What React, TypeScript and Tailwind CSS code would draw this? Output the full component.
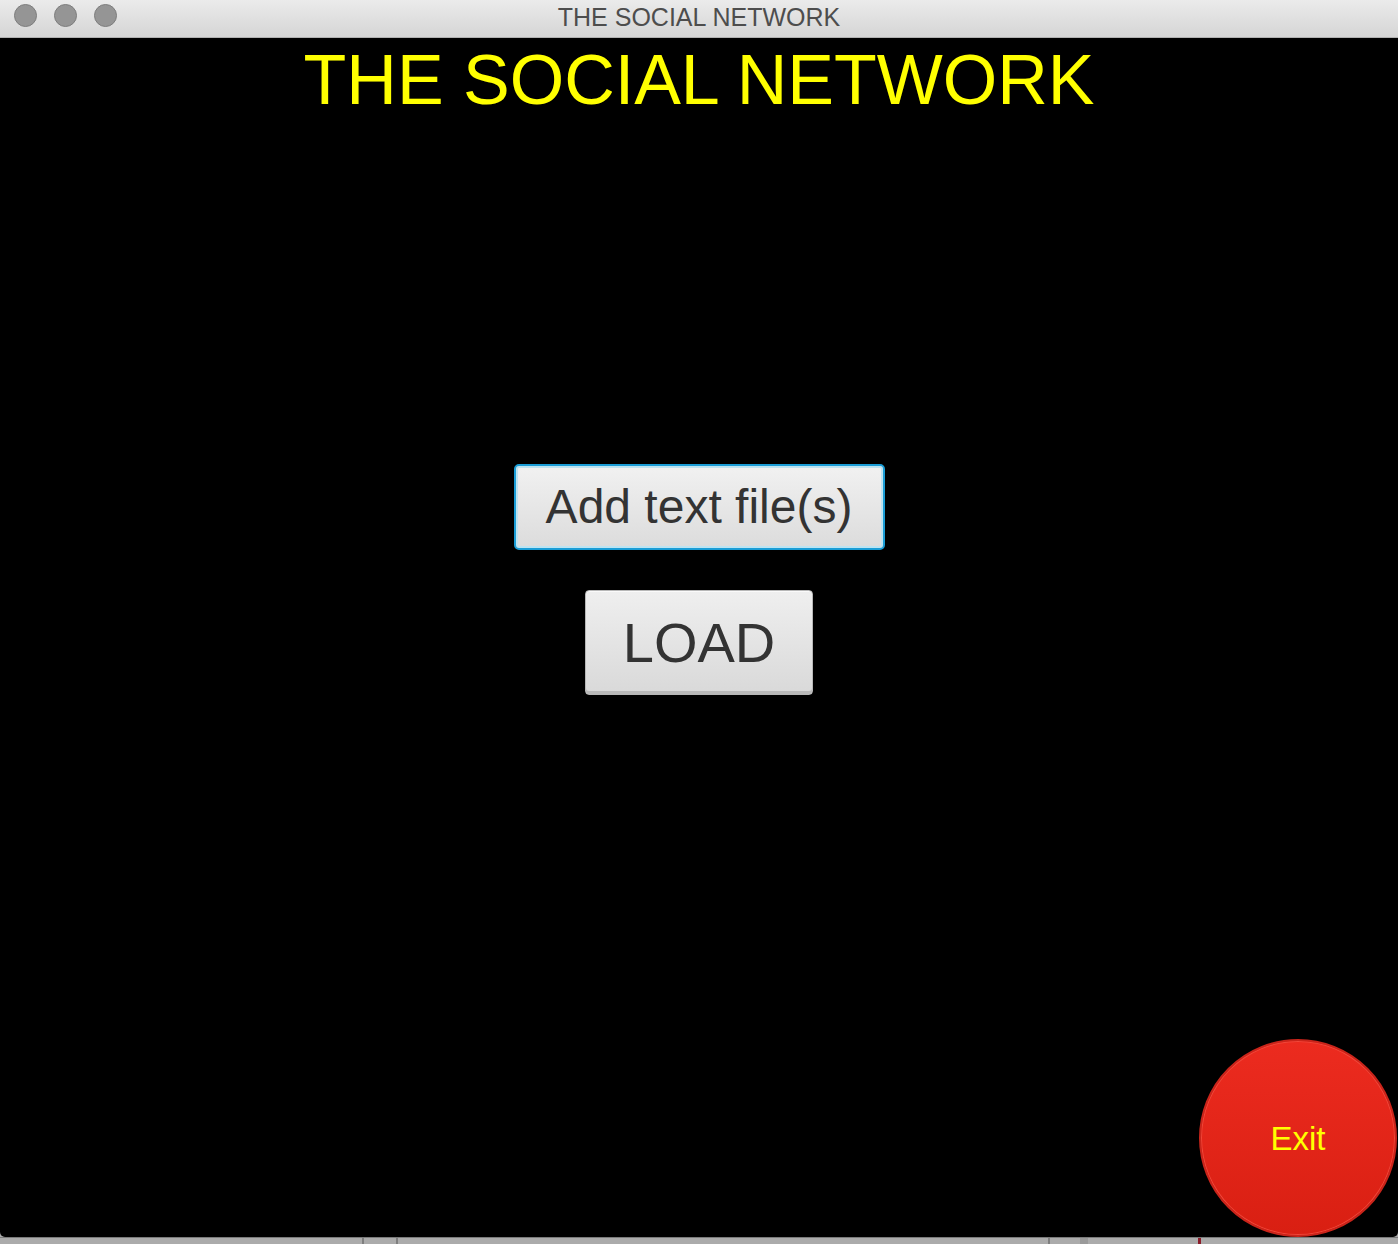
import * as React from "react";

export default function App() {
  return (
    <div className="flex h-[1244px] w-[1398px] flex-col overflow-hidden bg-[#a9a9a9] font-['Liberation_Sans',Arial,sans-serif]">
      {/* title bar */}
      <div className="relative flex h-[38px] shrink-0 items-start border-b border-[#b1b1b1] bg-gradient-to-b from-[#ebebeb] to-[#d5d5d5]">
        <div className="flex gap-[17px] pl-[14px] pt-[4px]">
          <span className="h-[23px] w-[23px] rounded-full border border-[#7d7d7d] bg-[#959595]" />
          <span className="h-[23px] w-[23px] rounded-full border border-[#7d7d7d] bg-[#959595]" />
          <span className="h-[23px] w-[23px] rounded-full border border-[#7d7d7d] bg-[#959595]" />
        </div>
        <div className="absolute inset-x-0 top-0 flex h-[35px] items-center justify-center text-[25px] leading-none text-[#4d4d4d]">
          THE SOCIAL NETWORK
        </div>
      </div>

      {/* window content */}
      <div className="flex h-[1199px] shrink-0 flex-col items-center rounded-b-[5px] bg-black">
        <h1 className="mt-[7px] text-[70px] leading-[70px] text-[#ffff00]">
          THE SOCIAL NETWORK
        </h1>

        <button className="mt-[349px] flex h-[86px] w-[371px] items-center justify-center rounded-[5px] border-2 border-[#1a9dd6] bg-gradient-to-b from-[#f1f1f1] to-[#dcdcdc] text-[48px] leading-none text-[#333333] shadow-[inset_0_0_0_2px_#bde3f1]">
          Add text file(s)
        </button>

        <button className="mt-[40px] flex h-[105px] w-[228px] items-center justify-center rounded-[4px] border border-[#b7b7b7] bg-gradient-to-b from-[#efefef] to-[#d9d9d9] text-[56px] leading-none text-[#333333] shadow-[inset_0_-3px_0_#b9b9b9,inset_0_1px_0_#fafafa]">
          LOAD
        </button>

        <div className="mt-auto flex w-full justify-end pr-[1px]">
          <button className="flex h-[198px] w-[198px] items-center justify-center rounded-full border-2 border-[#c9241a] bg-gradient-to-b from-[#ec2b1f] to-[#d91f12] text-[33px] leading-none text-[#ffff00] shadow-[inset_0_0_0_1px_#f0473a]">
            Exit
          </button>
        </div>
      </div>

      {/* desktop behind */}
      <div className="flex h-[7px] shrink-0 border-t border-[#7a7a7a] bg-[#ababab]">
        <span className="ml-[362px] h-full w-[2px] bg-[#7f7f7f]" />
        <span className="ml-[32px] h-full w-[2px] bg-[#7f7f7f]" />
        <span className="ml-[650px] h-full w-[2px] bg-[#7f7f7f]" />
        <span className="ml-[30px] h-full w-[8px] bg-[#9a9a9a]" />
        <span className="ml-[110px] h-full w-[3px] bg-[#8b1d2a]" />
      </div>
    </div>
  );
}
